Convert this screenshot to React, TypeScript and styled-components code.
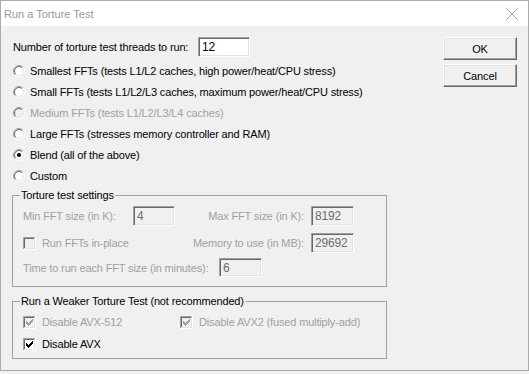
import React from "react";
import styled, { createGlobalStyle } from "styled-components";

const GlobalStyle = createGlobalStyle`
  html, body {
    margin: 0;
    padding: 0;
    background: #f0f0f0;
  }
  body {
    font-family: "Liberation Sans", Arial, sans-serif;
    font-size: 11px;
    letter-spacing: -0.15px;
    color: #000;
  }
`;

const Window = styled.div`
  width: 529px;
  height: 371px;
  box-sizing: border-box;
  border: 1px solid #ababab;
  display: flex;
  flex-direction: column;
  background: #f0f0f0;
`;

const TitleBar = styled.div`
  height: 25px;
  background: #fff;
  display: flex;
  align-items: center;
  justify-content: space-between;
  padding: 0 10px 0 3px;
`;

const TitleText = styled.span`
  font-size: 11px;
  letter-spacing: 0;
  color: #999;
`;

const Body = styled.div`
  flex: 1;
  display: flex;
  padding: 11px 0 0 11px;
`;

const LeftColumn = styled.div`
  width: 375px;
  display: flex;
  flex-direction: column;
`;

const RightColumn = styled.div`
  margin-left: 56px;
  display: flex;
  flex-direction: column;
  gap: 4px;
`;

const Row = styled.div<{ $h: number; $mt?: number }>`
  height: ${(p) => p.$h}px;
  margin-top: ${(p) => p.$mt ?? 0}px;
  display: flex;
  align-items: center;
`;

const Text = styled.span<{ $disabled?: boolean; $w?: number; $right?: boolean; $pl?: number }>`
  color: ${(p) => (p.$disabled ? "#a0a0a0" : "#000")};
  white-space: nowrap;
  box-sizing: border-box;
  padding-left: ${(p) => p.$pl ?? 0}px;
  ${(p) => (p.$w ? `width: ${p.$w}px; flex: none;` : "")}
  ${(p) => (p.$right ? "text-align: right; padding-right: 7px;" : "")}
`;

const TextBox = styled.div<{ $w: number; $h?: number; $disabled?: boolean }>`
  width: ${(p) => p.$w}px;
  height: ${(p) => p.$h ?? 20}px;
  box-sizing: border-box;
  flex: none;
  display: flex;
  align-items: center;
  padding-left: 3px;
  font-size: 12px;
  background: ${(p) => (p.$disabled ? "#f0f0f0" : "#fff")};
  color: ${(p) => (p.$disabled ? "#6d6d6d" : "#000")};
  border-style: solid;
  border-width: 1px;
  border-color: #a0a0a0 #fff #fff #a0a0a0;
  box-shadow: inset 1px 1px 0 #696969, inset -1px -1px 0 #e3e3e3;
`;

const RadioRow = styled.div`
  height: 21px;
  display: flex;
  align-items: center;
  gap: 5px;
  padding-left: 1px;
`;

const CheckLabel = styled.label<{ $w?: number }>`
  display: flex;
  align-items: center;
  gap: 6px;
  ${(p) => (p.$w ? `width: ${p.$w}px; flex: none;` : "")}
`;

const Group = styled.fieldset<{ $mt: number; $pt: number; $pb: number }>`
  margin: ${(p) => p.$mt}px 0 0 0;
  padding: ${(p) => p.$pt}px 0 ${(p) => p.$pb}px 10px;
  border: 1px solid #a0a0a0;
  min-width: 0;
`;

const Legend = styled.legend`
  margin-left: -3px;
  padding: 0 1px;
  line-height: 14px;
  color: #000;
`;

const Button = styled.button`
  width: 74px;
  height: 23px;
  box-sizing: border-box;
  font-family: inherit;
  font-size: 11px;
  letter-spacing: -0.15px;
  color: #000;
  background: #f0f0f0;
  border-style: solid;
  border-width: 1px;
  border-color: #fff #696969 #696969 #fff;
  box-shadow: inset -1px -1px 0 #a0a0a0, inset 1px 1px 0 #e3e3e3;
  padding: 0;
`;

function Radio({ checked, disabled }: { checked?: boolean; disabled?: boolean }) {
  return (
    <svg width="12" height="12" viewBox="0 0 12 12" style={{ flex: "none" }}>
      <circle cx="6" cy="6" r="5" fill={disabled ? "#f0f0f0" : "#fff"} />
      <path d="M9.9 2.1 A5.5 5.5 0 0 0 2.1 9.9" stroke="#a0a0a0" fill="none" />
      <path d="M9.2 2.8 A4.5 4.5 0 0 0 2.8 9.2" stroke="#696969" fill="none" />
      <path d="M2.1 9.9 A5.5 5.5 0 0 0 9.9 2.1" stroke="#fff" fill="none" />
      <path d="M2.8 9.2 A4.5 4.5 0 0 0 9.2 2.8" stroke="#e3e3e3" fill="none" />
      {checked && <circle cx="6" cy="6" r="2" fill={disabled ? "#a0a0a0" : "#000"} />}
    </svg>
  );
}

const checkCols = [5, 6, 7, 6, 5, 4, 3];

function Check({ checked, disabled }: { checked?: boolean; disabled?: boolean }) {
  return (
    <svg width="13" height="13" viewBox="0 0 13 13" style={{ flex: "none" }}>
      <rect x="0" y="0" width="13" height="13" fill="#fff" />
      <rect x="0" y="0" width="12" height="12" fill="#e3e3e3" />
      <path d="M0.5 12 V0.5 H12" stroke="#a0a0a0" fill="none" />
      <path d="M1.5 11 V1.5 H11" stroke="#696969" fill="none" />
      <rect x="2" y="2" width="9" height="9" fill={disabled ? "#f0f0f0" : "#fff"} />
      {checked &&
        checkCols.map((y, i) => (
          <rect key={i} x={3 + i} y={y} width="1" height="3" fill={disabled ? "#a0a0a0" : "#000"} />
        ))}
    </svg>
  );
}

function CloseIcon() {
  return (
    <svg width="12" height="12" viewBox="0 0 12 12">
      <path d="M0.5 0.5 L11.5 11.5 M11.5 0.5 L0.5 11.5" stroke="#a6a6a6" strokeWidth="1" />
    </svg>
  );
}

const radios = [
  { label: "Smallest FFTs (tests L1/L2 caches, high power/heat/CPU stress)" },
  { label: "Small FFTs (tests L1/L2/L3 caches, maximum power/heat/CPU stress)" },
  { label: "Medium FFTs (tests L1/L2/L3/L4 caches)", disabled: true },
  { label: "Large FFTs (stresses memory controller and RAM)" },
  { label: "Blend (all of the above)", checked: true },
  { label: "Custom" },
];

export default function App() {
  return (
    <>
      <GlobalStyle />
      <Window>
        <TitleBar>
          <TitleText>Run a Torture Test</TitleText>
          <CloseIcon />
        </TitleBar>
        <Body>
          <LeftColumn>
            <Row $h={20}>
              <Text $w={186} $pl={1}>Number of torture test threads to run:</Text>
              <TextBox $w={52}>12</TextBox>
            </Row>
            <div style={{ marginTop: 3 }}>
              {radios.map((r) => (
                <RadioRow key={r.label}>
                  <Radio checked={r.checked} disabled={r.disabled} />
                  <Text $disabled={r.disabled}>{r.label}</Text>
                </RadioRow>
              ))}
            </div>
            <Group $mt={2} $pt={4} $pb={9}>
              <Legend>Torture test settings</Legend>
              <Row $h={20}>
                <Text $disabled $w={110}>Min FFT size (in K):</Text>
                <TextBox $w={42} $disabled>4</TextBox>
                <Text $disabled $w={136} $right>Max FFT size (in K):</Text>
                <TextBox $w={43} $disabled>8192</TextBox>
              </Row>
              <Row $h={20} $mt={7}>
                <CheckLabel $w={152}>
                  <Check disabled />
                  <Text $disabled>Run FFTs in-place</Text>
                </CheckLabel>
                <Text $disabled $w={136} $right>Memory to use (in MB):</Text>
                <TextBox $w={43} $disabled>29692</TextBox>
              </Row>
              <Row $h={19} $mt={5}>
                <Text $disabled $w={196}>Time to run each FFT size (in minutes):</Text>
                <TextBox $w={43} $h={19} $disabled>6</TextBox>
              </Row>
            </Group>
            <Group $mt={7} $pt={6} $pb={6}>
              <Legend>Run a Weaker Torture Test (not recommended)</Legend>
              <Row $h={16}>
                <CheckLabel $w={157}>
                  <Check checked disabled />
                  <Text $disabled>Disable AVX-512</Text>
                </CheckLabel>
                <CheckLabel>
                  <Check checked disabled />
                  <Text $disabled>Disable AVX2 (fused multiply-add)</Text>
                </CheckLabel>
              </Row>
              <Row $h={16} $mt={6}>
                <CheckLabel>
                  <Check checked />
                  <Text>Disable AVX</Text>
                </CheckLabel>
              </Row>
            </Group>
          </LeftColumn>
          <RightColumn>
            <Button>OK</Button>
            <Button>Cancel</Button>
          </RightColumn>
        </Body>
      </Window>
    </>
  );
}
